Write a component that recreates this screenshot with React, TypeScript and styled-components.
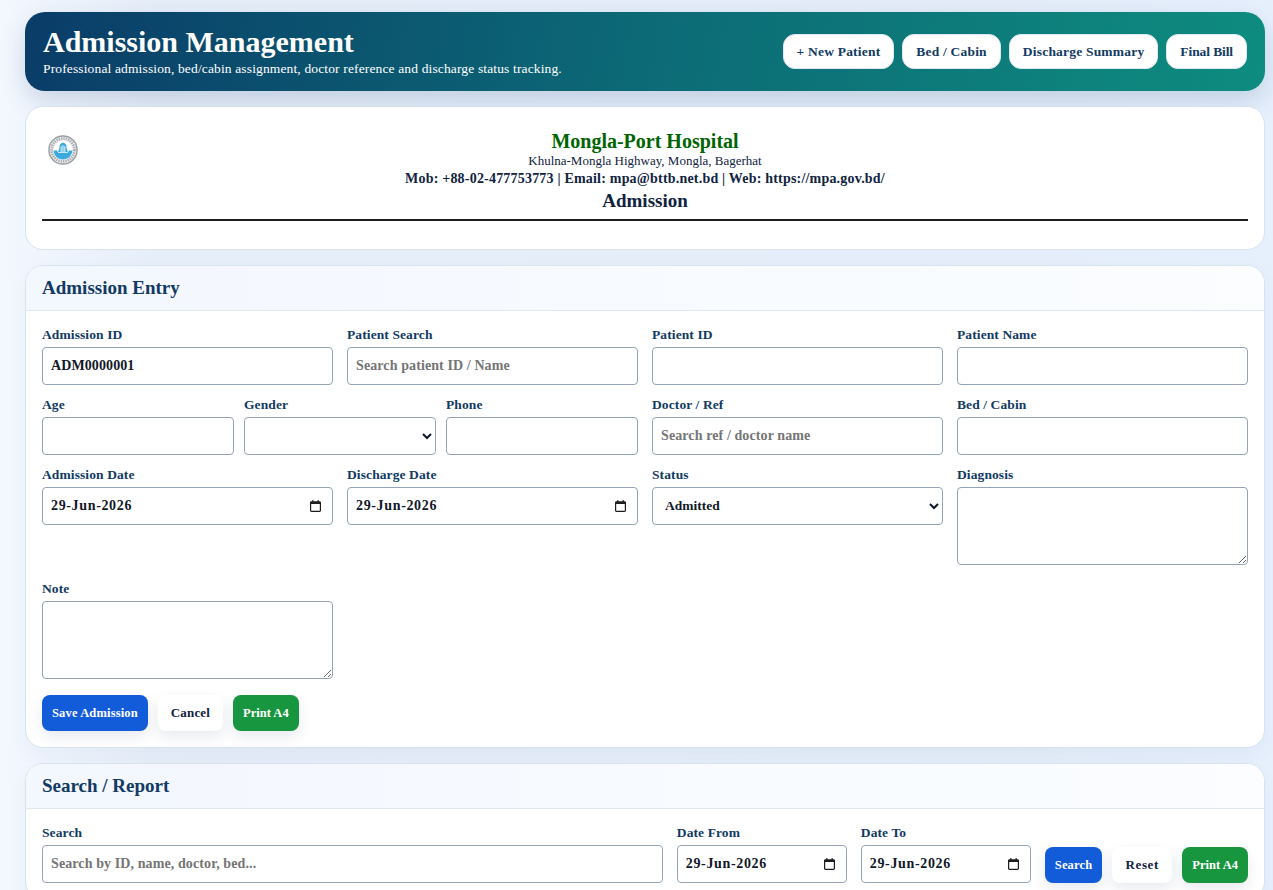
import React from 'react';
import styled, { createGlobalStyle } from 'styled-components'

const GlobalStyle = createGlobalStyle`
  * { box-sizing: border-box; }
  html, body { height: 100%; overflow: hidden; }
  body {
    margin: 0;
    background: linear-gradient(90deg, #f3f8ff 0%, #e6eef9 12%, #e4edf9 80%, #e6f0fd 100%);
    font-family: "Liberation Serif", serif;
    color: #10233f;
  }
`

const CalendarIcon = () => (
  <CalendarSvg viewBox="0 0 12 13" aria-hidden="true">
    <path fill="#1c1c1c" d="M2.500 0h1.200v1.200h4.600V0h1.200v1.200h1c.8 0 1.500.7 1.500 1.500v8.800c0 .8-.7 1.500-1.500 1.500h-9C.7 13 0 12.300 0 11.500V2.700c0-.8.7-1.500 1.500-1.500h1V0zM1.300 4.200v7.300c0 .1.100.2.200.2h9c.1 0 .2-.1.200-.2V4.200H1.300z" />
  </CalendarSvg>
)

const Logo = () => (
  <LogoSvg viewBox="0 0 32 32" aria-hidden="true">
    <circle cx="16" cy="16" r="15" fill="#f2f2f2" stroke="#9a9ea2" strokeWidth="1.500" />
    <circle cx="16" cy="16" r="12.200" fill="none" stroke="#a9adb1" strokeWidth="3" strokeDasharray="1.500 1" />
    <circle cx="16" cy="16" r="10" fill="#ffffff" />
    <path fill="#3aa9e0" d="M6 16.500h3.500l1.500 2.500h10l1.500-2.500H26c-.3 5.500-4.600 9.500-10 9.500S6.300 22 6 16.500z" />
    <path fill="#3aa9e0" d="M16 8c2.800.8 4.200 3 3.800 5.500l1.400 4.500H10.800l1.400-4.500C11.800 11 13.200 8.800 16 8z" />
    <path fill="#ffffff" d="M13.500 12h1v6h-1zM15.500 11h1v7h-1zM17.500 12h1v6h-1z" />
  </LogoSvg>
)

const Field = ({ label, value, placeholder }: { label: string, value?: string, placeholder?: string }) => (
  <FieldBox>
    <Label>{label}</Label>
    <Input readOnly value={value ?? ''} placeholder={placeholder} />
  </FieldBox>
)

const DateField = ({ label }: { label: string }) => (
  <FieldBox>
    <Label>{label}</Label>
    <DateWrap>
      <DateInput readOnly value="29-Jun-2026" />
      <CalendarIcon />
    </DateWrap>
  </FieldBox>
)

const SelectField = ({ label, options }: { label: string, options: string[] }) => (
  <FieldBox>
    <Label>{label}</Label>
    <Select>
      {options.map((option) => (
        <option key={option}>{option}</option>
      ))}
    </Select>
  </FieldBox>
)

const TextareaField = ({ label }: { label: string }) => (
  <FieldBox>
    <Label>{label}</Label>
    <Textarea />
  </FieldBox>
)

const App: React.FC = () => {
  return (
    <Page>
      <GlobalStyle />
      <Hero>
        <div>
          <HeroTitle>Admission Management</HeroTitle>
          <HeroText>Professional admission, bed/cabin assignment, doctor reference and discharge status tracking.</HeroText>
        </div>
        <HeroActions>
          <HeroButton>+ New Patient</HeroButton>
          <HeroButton>Bed / Cabin</HeroButton>
          <HeroButton>Discharge Summary</HeroButton>
          <HeroButton $tight>Final Bill</HeroButton>
        </HeroActions>
      </Hero>

      <PrintCard>
        <Logo />
        <HospitalName>Mongla-Port Hospital</HospitalName>
        <Address>Khulna-Mongla Highway, Mongla, Bagerhat</Address>
        <Contact>Mob: +88-02-477753773 | Email: mpa@bttb.net.bd | Web: https://mpa.gov.bd/</Contact>
        <DocTitle>Admission</DocTitle>
        <Rule />
      </PrintCard>

      <Card>
        <CardHead>Admission Entry</CardHead>
        <CardBody>
          <FormGrid>
            <Field label="Admission ID" value="ADM0000001" />
            <Field label="Patient Search" placeholder="Search patient ID / Name" />
            <Field label="Patient ID" />
            <Field label="Patient Name" />
            <TripleCell>
              <Field label="Age" />
              <SelectField label="Gender" options={['']} />
              <Field label="Phone" />
            </TripleCell>
            <Field label="Doctor / Ref" placeholder="Search ref / doctor name" />
            <Field label="Bed / Cabin" />
            <DateField label="Admission Date" />
            <DateField label="Discharge Date" />
            <SelectField label="Status" options={['Admitted', 'Discharged']} />
            <TextareaField label="Diagnosis" />
            <TextareaField label="Note" />
          </FormGrid>
          <Actions>
            <ActionButton $kind="primary">Save Admission</ActionButton>
            <ActionButton $kind="plain">Cancel</ActionButton>
            <ActionButton $kind="success">Print A4</ActionButton>
          </Actions>
        </CardBody>
      </Card>

      <Card>
        <CardHead>Search / Report</CardHead>
        <CardBody>
          <SearchRow>
            <Field label="Search" placeholder="Search by ID, name, doctor, bed..." />
            <DateField label="Date From" />
            <DateField label="Date To" />
            <SearchActions>
              <ActionButton $kind="primary">Search</ActionButton>
              <ResetButton $kind="plain">Reset</ResetButton>
              <ActionButton $kind="success">Print A4</ActionButton>
            </SearchActions>
          </SearchRow>
        </CardBody>
      </Card>
    </Page>
  )
}

const Page = styled.div`
  display: flex;
  flex-direction: column;
  gap: 15px;
  padding: 12px 8px 12px 25px;
`

const Hero = styled.header`
  display: flex;
  align-items: center;
  justify-content: space-between;
  height: 79px;
  padding: 0 18px;
  border-radius: 20px;
  background: linear-gradient(100deg, #0a3c68 0%, #0c6a76 50%, #0e8c7f 100%);
  box-shadow: 0 10px 26px rgba(15, 50, 100, 0.16);
  color: #fff;
`

const HeroTitle = styled.h1`
  margin: 0 0 2px;
  font-size: 30px;
  line-height: 32px;
  font-weight: 700;
`

const HeroText = styled.p`
  margin: 0;
  font-size: 13.500px;
  line-height: 17px;
  letter-spacing: 0.14px;
`

const HeroActions = styled.div`
  display: flex;
  gap: 8px;
`

const HeroButton = styled.button<{ $tight?: boolean }>`
  height: 35px;
  padding: 0 13px;
  border: 1px solid #dfe7f3;
  border-radius: 12px;
  background: #fff;
  color: #123a63;
  font-family: inherit;
  font-size: 13.500px;
  font-weight: 700;
  letter-spacing: ${({ $tight }) => ($tight ? '-0.1px' : '0.2px')};
`

const PrintCard = styled.section`
  display: flex;
  flex-direction: column;
  align-items: center;
  position: relative;
  height: 144px;
  padding: 23px 16px 0;
  border: 1px solid #d9e3f0;
  border-radius: 18px;
  background: #fff;
  color: #10233f;
`

const LogoSvg = styled.svg`
  position: absolute;
  left: 22px;
  top: 28px;
  width: 30px;
  height: 30px;
`

const HospitalName = styled.h2`
  margin: 0;
  color: #006400;
  font-size: 20px;
  line-height: 22px;
  font-weight: 700;
`

const Address = styled.div`
  margin-top: 1px;
  font-size: 13px;
  line-height: 16px;
`

const Contact = styled.div`
  margin-top: 1px;
  font-size: 14px;
  line-height: 18px;
  font-weight: 700;
  letter-spacing: 0.2px;
`

const DocTitle = styled.div`
  margin-top: 2px;
  font-size: 19px;
  line-height: 22px;
  font-weight: 700;
`

const Rule = styled.hr`
  align-self: stretch;
  width: 100%;
  height: 2px;
  margin: 7px 0 0;
  border: 0;
  background: #1f1f1f;
`

const Card = styled.section`
  border: 1px solid #d9e3f0;
  border-radius: 18px;
  background: #fff;
  box-shadow: 0 8px 20px rgba(15, 50, 100, 0.04);
  overflow: hidden;
`

const CardHead = styled.h3`
  margin: 0;
  height: 45px;
  padding: 0 16px;
  border-bottom: 1px solid #dfe7f3;
  background: linear-gradient(90deg, #f3f7fe 0%, #fbfdff 100%);
  color: #123a63;
  font-size: 19px;
  line-height: 44px;
  font-weight: 700;
`

const CardBody = styled.div`
  padding: 16px;
`

const FormGrid = styled.div`
  display: grid;
  grid-template-columns: repeat(4, 1fr);
  column-gap: 14px;
  row-gap: 12px;
  align-items: start;
`

const TripleCell = styled.div`
  grid-column: span 2;
  display: grid;
  grid-template-columns: repeat(3, 1fr);
  gap: 10px;
`

const FieldBox = styled.label`
  display: flex;
  flex-direction: column;
  min-width: 0;
`

const Label = styled.span`
  height: 20px;
  color: #123a63;
  font-size: 13.500px;
  line-height: 16px;
  font-weight: 700;
  letter-spacing: 0.1px;
`

const Input = styled.input`
  width: 100%;
  height: 38px;
  padding: 0 8px;
  border: 1px solid #94a3b8;
  border-radius: 4px;
  background: #fff;
  color: #111827;
  font-family: inherit;
  font-size: 14px;
  font-weight: 700;
  letter-spacing: 0.1px;
  outline: none;

  &::placeholder {
    color: #757575;
    opacity: 1;
  }
`

const DateWrap = styled.div`
  position: relative;
`

const DateInput = styled(Input)`
  letter-spacing: 0.65px;
`

const CalendarSvg = styled.svg`
  position: absolute;
  right: 12px;
  top: 13px;
  width: 11px;
  height: 12px;
  pointer-events: none;
`

const Select = styled.select`
  width: 100%;
  height: 38px;
  padding: 0 8px 2px;
  border: 1px solid #94a3b8;
  border-radius: 4px;
  background: #fff;
  color: #111827;
  font-family: inherit;
  font-size: 13.500px;
  font-weight: 700;
`

const Textarea = styled.textarea`
  display: block;
  width: 100%;
  height: 78px;
  margin-bottom: 4px;
  border: 1px solid #94a3b8;
  border-radius: 4px;
  background: #fff;
  outline: none;
`

const Actions = styled.div`
  display: flex;
  gap: 10px;
  margin-top: 12px;
`

const kinds = {
  primary: { background: '#125bd9', color: '#fff', padding: '10px', size: '12.5px', spacing: '0.15px' },
  plain: { background: '#fff', color: '#10233f', padding: '13px', size: '13px', spacing: '0.15px' },
  success: { background: '#17963f', color: '#fff', padding: '10px', size: '12.5px', spacing: '0.03px' },
}

const ActionButton = styled.button<{ $kind: keyof typeof kinds }>`
  height: 36px;
  padding: 0 ${({ $kind }) => kinds[$kind].padding};
  border: 0;
  border-radius: 8px;
  background: ${({ $kind }) => kinds[$kind].background};
  color: ${({ $kind }) => kinds[$kind].color};
  box-shadow: 0 6px 14px rgba(15, 50, 100, 0.1);
  font-family: inherit;
  font-size: ${({ $kind }) => kinds[$kind].size};
  font-weight: 700;
  letter-spacing: ${({ $kind }) => kinds[$kind].spacing};
`

const ResetButton = styled(ActionButton)`
  min-width: 60px;
  letter-spacing: 0.6px;
`

const SearchRow = styled.div`
  display: grid;
  grid-template-columns: 1fr 170px 170px auto;
  column-gap: 14px;
  align-items: end;
`

const SearchActions = styled.div`
  display: flex;
  gap: 10px;
`

export default App;
